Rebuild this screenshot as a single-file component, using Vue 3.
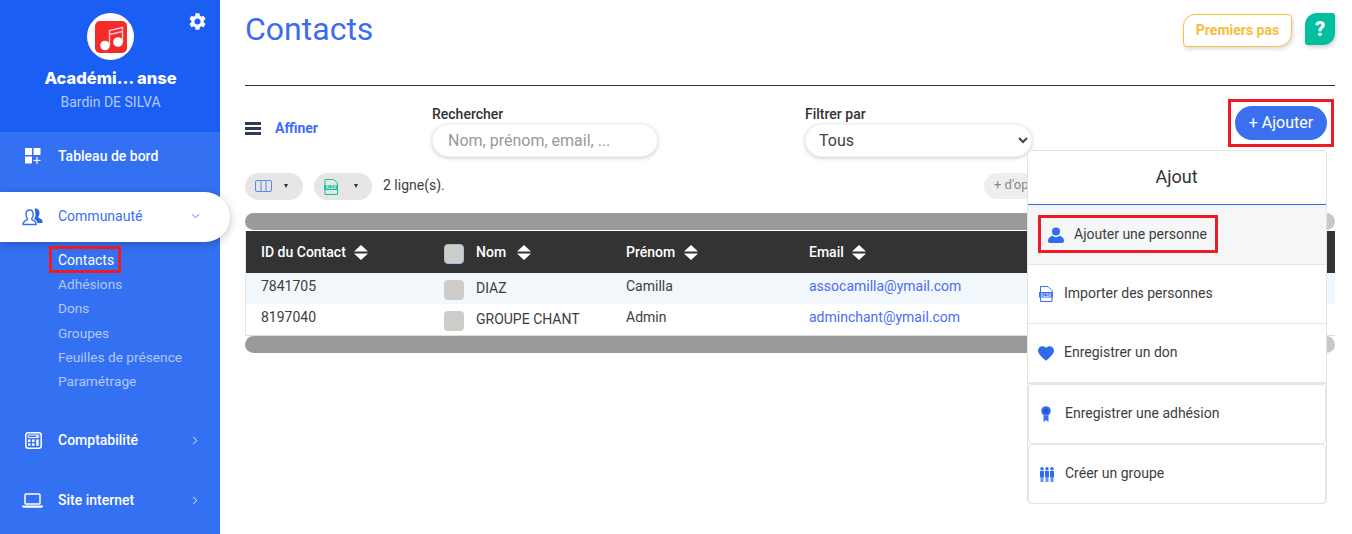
<script setup>
const subs = ['Contacts', 'Adhésions', 'Dons', 'Groupes', 'Feuilles de présence', 'Paramétrage']
const rows = [
  { id: '7841705', nom: 'DIAZ', prenom: 'Camilla', email: 'assocamilla@ymail.com' },
  { id: '8197040', nom: 'GROUPE CHANT', prenom: 'Admin', email: 'adminchant@ymail.com' },
]
const heads = [
  { key: 'id', label: 'ID du Contact', gap: 'g1' },
  { key: 'nom', label: 'Nom', gap: 'g2' },
  { key: 'prenom', label: 'Prénom', gap: 'g3' },
  { key: 'email', label: 'Email', gap: 'g4' },
]
const actions = [
  { key: 'person', label: 'Ajouter une personne', cls: 'first' },
  { key: 'xlsx', label: 'Importer des personnes', cls: '' },
  { key: 'heart', label: 'Enregistrer un don', cls: '' },
  { key: 'medal', label: 'Enregistrer une adhésion', cls: 'boxed' },
  { key: 'group', label: 'Créer un groupe', cls: 'boxed' },
]
</script>

<template>
  <div class="page">
    <aside class="side">
      <div class="brand">
        <svg class="gear" viewBox="2 2 20 20" width="17" height="17"><path fill="#fff" d="M19.14 12.94c.04-.3.06-.61.06-.94 0-.32-.02-.64-.07-.94l2.03-1.58c.18-.14.23-.41.12-.61l-1.92-3.32c-.12-.22-.37-.29-.59-.22l-2.39.96c-.5-.38-1.03-.7-1.62-.94l-.36-2.54c-.04-.24-.24-.41-.48-.41h-3.84c-.24 0-.43.17-.47.41l-.36 2.54c-.59.24-1.13.57-1.62.94l-2.39-.96c-.22-.08-.47 0-.59.22L2.74 8.87c-.12.21-.08.47.12.61l2.03 1.58c-.05.3-.09.63-.09.94s.02.64.07.94l-2.03 1.58c-.18.14-.23.41-.12.61l1.92 3.32c.12.22.37.29.59.22l2.39-.96c.5.38 1.03.7 1.62.94l.36 2.54c.05.24.24.41.48.41h3.84c.24 0 .44-.17.47-.41l.36-2.54c.59-.24 1.13-.56 1.62-.94l2.39.96c.22.08.47 0 .59-.22l1.92-3.32c.12-.22.07-.47-.12-.61l-2.01-1.58zM12 15.6c-1.98 0-3.6-1.62-3.6-3.6s1.62-3.6 3.6-3.6 3.6 1.62 3.6 3.6-1.62 3.6-3.6 3.6z"/></svg>
        <div class="logo">
          <svg viewBox="0 0 32 32" width="32" height="32">
            <rect width="32" height="32" rx="5" fill="#f52a2a"/>
            <path d="M14.5 24V9.5L27.5 6.5V21" fill="none" stroke="#ffc4c4" stroke-width="1.4"/>
            <path d="M14.5 13.5L27.5 10.5" fill="none" stroke="#ffc4c4" stroke-width="1.4"/>
            <circle cx="10" cy="24.5" r="4.8" fill="#fff"/>
            <circle cx="23" cy="21" r="4.8" fill="#fff"/>
          </svg>
        </div>
        <div class="org">Académi… anse</div>
        <div class="user">Bardin DE SILVA</div>
      </div>

      <nav class="nav">
        <a class="item dash">
          <svg class="ico" viewBox="0 0 16 16" width="16" height="16" fill="#fff">
            <rect x="0" y="0" width="7" height="7"/><rect x="8.5" y="0" width="7" height="7"/><rect x="0" y="8.5" width="7" height="7"/>
            <rect x="11.3" y="9" width="1.2" height="7"/><rect x="8.5" y="11.9" width="7" height="1.2"/>
          </svg>
          <span>Tableau de bord</span>
        </a>
        <a class="item active">
          <svg class="ico big" viewBox="0 0 21 18" width="21" height="18">
            <path d="M12.5 .8c2.600-.9 5 .8 5 4 0 1.500-.3 2.700-1 3.600-.4.500-.3 1 .2 1.300 1.500.9 3.800 1.400 3.800 3.800V15h-5c-.2-2-1.500-3-3.500-4 1.300-1.500 1.600-3 1.500-5-.1-2-.5-4-1-5.200z" fill="#2a62ea"/>
            <path d="M1 16.500c0-3 2-3.600 4-4.600.6-.4.7-1 .2-1.600C4.300 9.300 4 8 4 6.500 4 3.800 5.600 2 7.600 2s3.600 1.800 3.600 4.500c0 1.500-.3 2.800-1.200 3.800-.5.600-.4 1.200.2 1.600 2 1 4 1.600 4 4.600z" fill="#fff" stroke="#3a6ff0" stroke-width="1.400"/>
          </svg>
          <span>Communauté</span>
          <svg class="chev" viewBox="0 0 10 6" width="9" height="6"><path d="M1 1l4 4 4-4" fill="none" stroke="#3a6ff0" stroke-width="1"/></svg>
        </a>
        <ul class="subs">
          <li v-for="(s, i) in subs" :key="s" :class="{ cur: i === 0 }">
            {{ s }}<i v-if="i === 0" class="mark mark-contacts"></i>
          </li>
        </ul>
        <a class="item compta">
          <svg class="ico" viewBox="0 0 17 17" width="17" height="17">
            <rect x=".8" y=".8" width="15.400" height="15.400" rx="2.500" fill="none" stroke="#fff" stroke-width="1.500"/>
            <rect x="3.200" y="3" width="10.600" height="2.600" rx=".6" fill="none" stroke="#fff" stroke-width="1"/>
            <rect x="11" y="3" width="2.800" height="2.600" fill="#c9d9fb"/>
            <g fill="#fff"><rect x="3" y="7.500" width="2.500" height="2.500"/><rect x="7" y="7.500" width="2.500" height="2.500"/><rect x="3" y="11.300" width="2.500" height="2.500"/><rect x="7" y="11.300" width="2.500" height="2.500"/><rect x="11.200" y="7.500" width="2.500" height="6.300"/></g>
          </svg>
          <span>Comptabilité</span>
          <svg class="chev" viewBox="0 0 6 10" width="6" height="9"><path d="M1 1l4 4-4 4" fill="none" stroke="#fff" stroke-width="1"/></svg>
        </a>
        <a class="item site">
          <svg class="ico big" viewBox="0 0 21 15" width="21" height="15">
            <rect x="3" y="1" width="15" height="10" rx="1" fill="none" stroke="#fff" stroke-width="1.500"/>
            <path d="M0 12.500h21v.5c0 1-1 1.800-2 1.800H2c-1 0-2-.8-2-1.800z" fill="#fff"/>
          </svg>
          <span>Site internet</span>
          <svg class="chev" viewBox="0 0 6 10" width="6" height="9"><path d="M1 1l4 4-4 4" fill="none" stroke="#fff" stroke-width="1"/></svg>
        </a>
      </nav>
    </aside>

    <main class="main">
      <header class="top">
        <h1>Contacts</h1>
        <div class="top-actions">
          <button class="first-steps">Premiers pas</button>
          <button class="help">?</button>
        </div>
      </header>

      <section class="filters">
        <div class="refine">
          <span class="burger"><i></i><i></i><i></i></span>
          <span class="refine-label">Affiner</span>
        </div>
        <div class="field search">
          <label>Rechercher</label>
          <input type="text" placeholder="Nom, prénom, email, ..." />
        </div>
        <div class="field filter">
          <label>Filtrer par</label>
          <select><option>Tous</option></select>
        </div>
        <div class="add-wrap">
          <button class="add">+ Ajouter</button>
          <i class="mark mark-add"></i>
        </div>
      </section>

      <section class="tools">
        <span class="pill">
          <svg viewBox="0 0 17 12" width="17" height="12"><rect x=".5" y=".5" width="16" height="11" rx="1.500" fill="none" stroke="#5c86f2"/><path d="M6 .5v11M11 .5v11" stroke="#5c86f2"/></svg>
          <em class="caret"></em>
        </span>
        <span class="pill xl">
          <svg viewBox="0 0 14 16" width="14" height="16">
            <path d="M1 .5h8.500L13.500 4v11.500H1z" fill="none" stroke="#0fc2a2"/>
            <rect x="0" y="6" width="14" height="5" fill="#0fc2a2"/>
            <text x="7" y="10.300" font-size="4.600" text-anchor="middle" fill="#fff" font-family="Roboto, sans-serif">XLSX</text>
          </svg>
          <em class="caret"></em>
        </span>
        <span class="count">2 ligne(s).</span>
        <span class="more">+ d'options</span>
      </section>

      <div class="scroll"><div class="thumb"></div></div>
      <div class="table">
        <div class="tr th">
          <template v-for="h in heads" :key="h.key">
            <span v-if="h.key === 'nom'" class="box box-head"></span>
            <div class="cell" :class="h.gap">
              <span>{{ h.label }}</span>
              <svg viewBox="0 0 14 14" width="14" height="15" preserveAspectRatio="none"><path d="M7 0l7 6H0zM0 8h14l-7 6z" fill="#fff"/></svg>
            </div>
          </template>
        </div>
        <div v-for="(r, i) in rows" :key="r.id" class="tr td" :class="{ odd: i === 0 }">
          <div class="cell up">{{ r.id }}</div>
          <span class="box"></span>
          <div class="cell lo">{{ r.nom }}</div>
          <div class="cell up">{{ r.prenom }}</div>
          <div class="cell up link">{{ r.email }}</div>
        </div>
      </div>
      <div class="scroll"><div class="thumb"></div></div>
    </main>

    <div class="pop">
      <div class="pop-title">Ajout</div>
      <div v-for="a in actions" :key="a.key" class="act" :class="a.cls">
        <svg v-if="a.key === 'person'" viewBox="0 0 16 16" width="16" height="16" fill="#2f6bef">
          <circle cx="8" cy="4.500" r="4"/><path d="M0 14c0-3 2.500-5 5-5 1 .8 2 1.200 3 1.200S10 9.800 11 9c2.500 0 5 2 5 5 0 1-.8 2-2 2H2c-1.200 0-2-1-2-2z"/>
        </svg>
        <svg v-else-if="a.key === 'xlsx'" viewBox="0 0 16 16" width="16" height="16">
          <path d="M2.500.5h7.500L14 4.500v11H2.500z" fill="none" stroke="#3a6ff0"/>
          <rect x="1" y="6" width="14" height="5.500" fill="#3a6ff0"/>
          <text x="8" y="10.500" font-size="4.600" text-anchor="middle" fill="#fff" font-family="Roboto, sans-serif">XLSX</text>
        </svg>
        <svg v-else-if="a.key === 'heart'" viewBox="2 3 20 18.400" width="16" height="15">
          <path fill="#2f6bef" d="M12 21.350l-1.450-1.320C5.400 15.360 2 12.280 2 8.500 2 5.420 4.420 3 7.500 3c1.740 0 3.410.81 4.500 2.090C13.090 3.810 14.760 3 16.500 3 19.580 3 22 5.420 22 8.500c0 3.780-3.400 6.860-8.550 11.540L12 21.350z"/>
        </svg>
        <svg v-else-if="a.key === 'medal'" viewBox="-2 0 16 16" width="16" height="16" fill="#3a6ff0">
          <circle cx="5" cy="5" r="4.800"/><circle cx="5" cy="5" r="2.600" fill="#1e58d8"/><path d="M2.500 9.500h5V16L5 14l-2.500 2z"/>
        </svg>
        <svg v-else viewBox="-1 0 16 15" width="16" height="15" fill="#2f6bef">
          <circle cx="2" cy="1.800" r="1.700"/><circle cx="7" cy="1.800" r="1.700"/><circle cx="12" cy="1.800" r="1.700"/>
          <path d="M0 4h4v6h-.6v5H2.300v-4.500h-.6V15H.6v-5H0z"/>
          <path d="M5 4h4v6h-.6v5H7.300v-4.500h-.6V15H5.600v-5H5z"/>
          <path d="M10 4h4v6h-.6v5h-1.100v-4.500h-.6V15h-1.100v-5H10z"/>
        </svg>
        <span>{{ a.label }}</span>
        <i v-if="a.key === 'person'" class="mark mark-person"></i>
      </div>
    </div>
  </div>
</template>

<style>
html, body { margin: 0; background: #fff; }
</style>

<style scoped>
.page {
  position: relative;
  width: 1352px;
  height: 534px;
  overflow: hidden;
  display: flex;
  font-family: Roboto, "Liberation Sans", sans-serif;
  font-size: 14px;
  color: #3d3d3d;
  background: #fff;
}
.side {
  width: 220px;
  flex: none;
  background: #3470f2;
  position: relative;
  z-index: 2;
}
.brand {
  position: relative;
  height: 132px;
  background: #1b5ef3;
  box-sizing: border-box;
  padding-top: 13px;
  display: flex;
  flex-direction: column;
  align-items: center;
  padding-left: 1px;
}
.gear { position: absolute; left: 189px; top: 13px; }
.logo {
  width: 47px;
  height: 47px;
  border-radius: 50%;
  background: #fff;
  display: flex;
  align-items: center;
  justify-content: center;
}
.org {
  margin-top: 9px;
  font-family: Inter, Roboto, sans-serif;
  font-size: 16.5px;
  font-weight: 800;
  line-height: 19px;
  color: #fff;
}
.user {
  margin-top: 5px;
  font-size: 14px;
  line-height: 18px;
  color: #b3c9fa;
}
.nav { display: flex; flex-direction: column; }
.item {
  display: flex;
  align-items: center;
  height: 48px;
  padding-left: 25px;
  color: #fff;
  font-weight: 500;
  position: relative;
}
.item span { position: absolute; left: 58px; }
.ico.big { margin-left: -3px; }
.chev { position: absolute; left: 192px; }
.active {
  margin-top: 12px;
  height: 50px;
  width: 230px;
  box-sizing: border-box;
  background: #fff;
  border-radius: 0 25px 25px 0;
  color: #3a6ff0;
  font-weight: 400;
  box-shadow: 0 2px 8px rgba(0, 0, 0, .25);
}
.active span { margin-top: -2px; }
.active .chev { left: 191px; margin-top: -2px; }
.subs {
  list-style: none;
  margin: 6px 0 0;
  padding: 0 0 0 58px;
  color: #b3c9fa;
  font-size: 13.7px;
  line-height: 24.2px;
}
.subs li { position: relative; }
.subs .cur { color: #fff; font-size: 14px; }
.compta { height: 50px; margin-top: 22px; }
.site { height: 50px; margin-top: 10px; }
.mark {
  position: absolute;
  border: 3px solid #ed1c24;
  box-sizing: border-box;
  pointer-events: none;
}
.mark-contacts { left: -9px; top: -2px; width: 72px; height: 27px; }
.mark-add { left: -7px; top: -7px; width: 106px; height: 48px; }
.mark-person { left: 10px; top: 10px; width: 180px; height: 38px; }

.main {
  flex: 1;
  padding: 0 17px 0 25px;
  min-width: 0;
}
.top {
  height: 85px;
  border-bottom: 1px solid #333;
  position: relative;
  display: flex;
  justify-content: space-between;
  align-items: flex-start;
}
h1 {
  margin: 10px 0 0;
  font-size: 32px;
  line-height: 38px;
  font-weight: 400;
  color: #3b6cf0;
}
.top-actions { display: flex; gap: 13px; margin-top: 13px; }
.first-steps {
  width: 109px;
  height: 33px;
  margin-top: 1px;
  border: 1px solid #f6c244;
  background: #fff;
  border-radius: 12px 4px 14px 4px;
  color: #f6bd3b;
  font: 700 14px Roboto, sans-serif;
  box-shadow: 1px 2px 4px rgba(0, 0, 0, .15);
  padding: 0 0 2px;
}
.help {
  width: 30px;
  height: 32px;
  border: 0;
  padding: 0;
  background: #02bfa0;
  border-radius: 12px 3px 12px 3px;
  color: #fff;
  font: 900 20px Roboto, sans-serif;
  box-shadow: 1px 2px 4px rgba(0, 0, 0, .2);
}

.filters {
  display: flex;
  margin-top: 20px;
  height: 51px;
}
.refine {
  width: 187px;
  height: 44px;
  display: flex;
  align-items: center;
}
.burger {
  width: 16px;
  display: flex;
  flex-direction: column;
  gap: 2px;
  margin-right: 14px;
}
.burger i { height: 3px; background: #2f3b52; display: block; }
.refine-label { color: #3f6cf5; font-weight: 700; }
.field { display: flex; flex-direction: column; }
.field label { font-weight: 500; line-height: 16px; color: #333; margin-bottom: 2px; }
.search { width: 373px; }
.filter { width: 227px; }
.field input, .field select {
  height: 33px;
  box-sizing: border-box;
  border: 1px solid #f3f3f3;
  border-radius: 17px;
  background: #fff;
  box-shadow: 0 1px 4px rgba(0, 0, 0, .2);
  font: 400 16px Roboto, sans-serif;
  color: #444;
  outline: none;
}
.field input { width: 226px; padding: 0 15px; }
.field input::placeholder { color: #999; opacity: 1; }
.field select { width: 227px; padding: 0 9px; }
.add-wrap { position: relative; margin-left: auto; margin-right: 8px; height: 34px; }
.add {
  width: 92px;
  height: 34px;
  border: 0;
  border-radius: 17px;
  background: #3a6ff0;
  color: #fff;
  font: 400 16px Roboto, sans-serif;
  padding: 0 0 2px;
}

.tools {
  display: flex;
  align-items: center;
  margin-top: 16px;
  height: 27px;
  position: relative;
}
.pill {
  width: 58px;
  height: 27px;
  box-sizing: border-box;
  padding: 0 0 2px 10px;
  border-radius: 14px;
  background: #e8e6e4;
  display: inline-flex;
  align-items: center;
  margin-right: 11px;
  position: relative;
}
.pill.xl { padding-bottom: 0; }
.pill.xl .caret { left: 40px; }
.caret {
  position: absolute;
  left: 39px;
  top: 11px;
  border: 2.5px solid transparent;
  border-top: 4px solid #333;
  border-bottom: 0;
}
.count { color: #3d3d3d; padding-bottom: 3px; }
.more {
  position: absolute;
  left: 739px;
  top: 0;
  width: 90px;
  height: 26px;
  line-height: 24px;
  box-sizing: border-box;
  padding-left: 10px;
  border-radius: 13px;
  background: #eee;
  color: #888;
  font-size: 13px;
}

.scroll {
  height: 17px;
  border-radius: 9px;
  background: #c8c8c8;
  overflow: hidden;
}
.tools + .scroll { margin-top: 13px; }
.thumb { width: 1060px; height: 17px; background: #9a9a9a; border-radius: 9px 0 0 9px; }
.table {
  margin-top: 1px;
  border-left: 1px solid #e4e4e4;
  border-bottom: 1px solid #ddd;
}
.tr {
  display: grid;
  grid-template-columns: 198px 32px 150px 183px 1fr;
  align-items: center;
}
.tr > .cell:first-child { padding-left: 15px; }
.th { height: 42px; background: #333; color: #fff; font-weight: 500; }
.th .cell { display: flex; align-items: center; }
.th svg { margin-top: 1px; }
.g1 svg { margin-left: 8px; }
.g2 svg { margin-left: 11px; }
.g3 svg { margin-left: 9px; }
.g4 svg { margin-left: 8px; }
.td { height: 31px; background: #fff; }
.td.odd { background: #f2f7fb; }
.up { padding-bottom: 6px; }
.lo { padding-bottom: 2px; }
.link { color: #4a6cf5; }
.box {
  display: block;
  width: 20px;
  height: 20px;
  border-radius: 4px;
  background: #cdccc8;
  margin-top: 3px;
}
.box-head { border: 1px solid #9fc0e4; box-sizing: border-box; margin-top: 4px; }

.pop {
  position: absolute;
  left: 1027px;
  top: 150px;
  width: 300px;
  height: 354px;
  box-sizing: border-box;
  border: 1px solid #e3e3e3;
  border-radius: 4px;
  background: #fff;
  z-index: 3;
  display: flex;
  flex-direction: column;
}
.pop-title {
  height: 54px;
  flex: none;
  box-sizing: border-box;
  border-bottom: 1px solid #2f6bef;
  text-align: center;
  font-size: 18px;
  line-height: 52px;
  color: #333;
  padding-right: 1px;
}
.act {
  position: relative;
  height: 59px;
  flex: none;
  display: flex;
  align-items: center;
  box-sizing: border-box;
  padding-left: 10px;
  gap: 10px;
  border-bottom: 1px solid #e6e6e6;
}
.act svg { flex: none; width: 16px; }
.act span { margin-bottom: 2px; }
.act.first { background: #f5f6f8; height: 60px; padding-left: 20px; }
.act.boxed {
  height: 60px;
  border: 1px solid #e6e6e6;
  border-radius: 4px;
  padding-left: 10px;
}
.act:nth-child(4) { height: 60px; border-bottom-width: 2px; }
</style>
